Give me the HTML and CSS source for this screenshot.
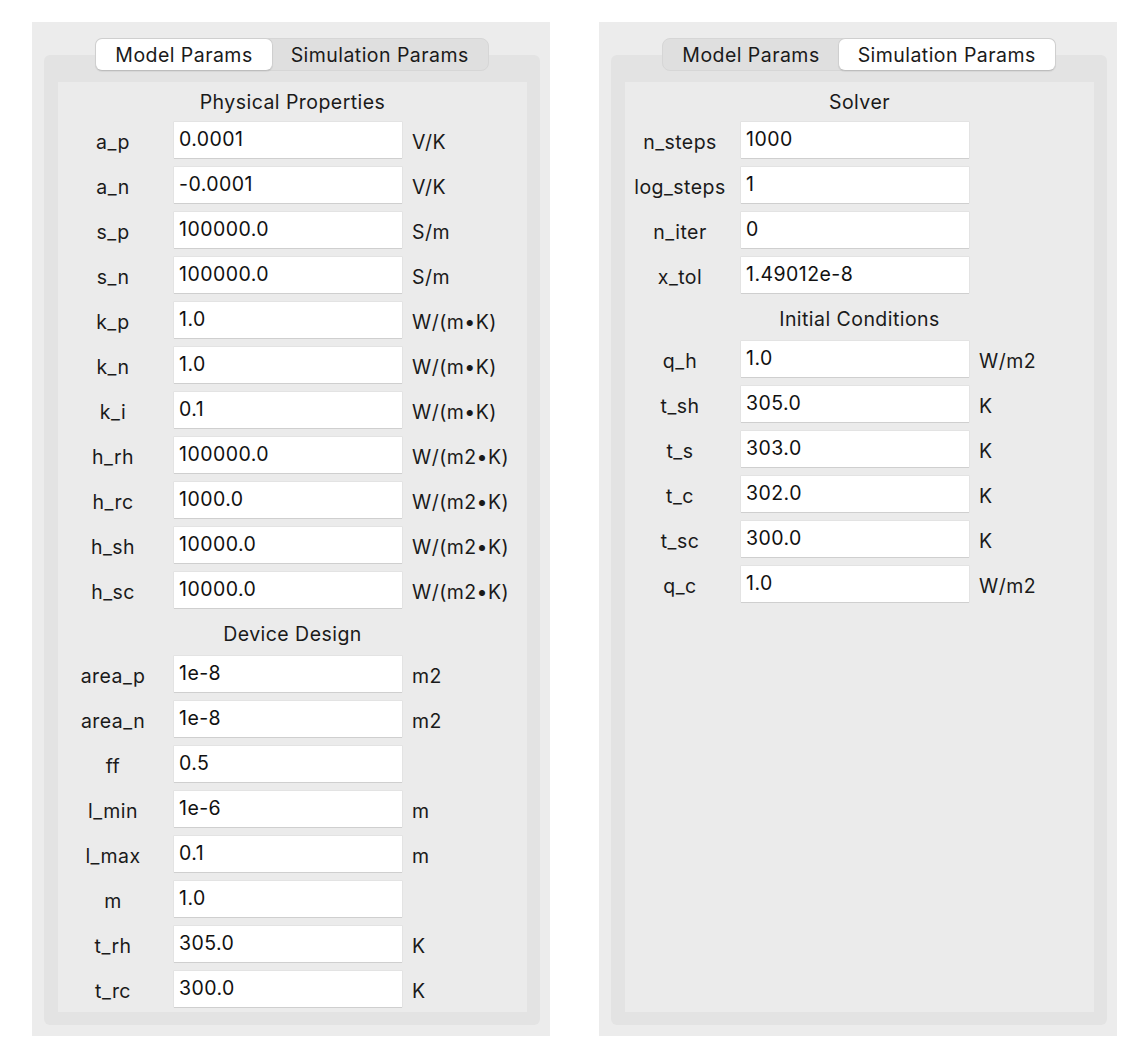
FILE: index.html
```html
<!DOCTYPE html>
<html>
<head>
<meta charset="utf-8">
<link rel="stylesheet" href="styles.css">
</head>
<body>
<div class="window">
  <div class="tabs">
    <div class="tab selected">Model Params</div>
    <div class="tab">Simulation Params</div>
  </div>
  <div class="group">
    <div class="content">
      <div class="title">Physical Properties</div>
      <div class="row"><span class="label">a_p</span><span class="field">0.0001</span><span class="unit">V/K</span></div>
      <div class="row"><span class="label">a_n</span><span class="field">-0.0001</span><span class="unit">V/K</span></div>
      <div class="row"><span class="label">s_p</span><span class="field">100000.0</span><span class="unit">S/m</span></div>
      <div class="row"><span class="label">s_n</span><span class="field">100000.0</span><span class="unit">S/m</span></div>
      <div class="row"><span class="label">k_p</span><span class="field">1.0</span><span class="unit">W/(m•K)</span></div>
      <div class="row"><span class="label">k_n</span><span class="field">1.0</span><span class="unit">W/(m•K)</span></div>
      <div class="row"><span class="label">k_i</span><span class="field">0.1</span><span class="unit">W/(m•K)</span></div>
      <div class="row"><span class="label">h_rh</span><span class="field">100000.0</span><span class="unit">W/(m2•K)</span></div>
      <div class="row"><span class="label">h_rc</span><span class="field">1000.0</span><span class="unit">W/(m2•K)</span></div>
      <div class="row"><span class="label">h_sh</span><span class="field">10000.0</span><span class="unit">W/(m2•K)</span></div>
      <div class="row"><span class="label">h_sc</span><span class="field">10000.0</span><span class="unit">W/(m2•K)</span></div>
      <div class="title sub">Device Design</div>
      <div class="row"><span class="label">area_p</span><span class="field">1e-8</span><span class="unit">m2</span></div>
      <div class="row"><span class="label">area_n</span><span class="field">1e-8</span><span class="unit">m2</span></div>
      <div class="row"><span class="label">ff</span><span class="field">0.5</span><span class="unit"></span></div>
      <div class="row"><span class="label">l_min</span><span class="field">1e-6</span><span class="unit">m</span></div>
      <div class="row"><span class="label">l_max</span><span class="field">0.1</span><span class="unit">m</span></div>
      <div class="row"><span class="label">m</span><span class="field">1.0</span><span class="unit"></span></div>
      <div class="row"><span class="label">t_rh</span><span class="field">305.0</span><span class="unit">K</span></div>
      <div class="row"><span class="label">t_rc</span><span class="field">300.0</span><span class="unit">K</span></div>
    </div>
  </div>
</div>
<div class="window">
  <div class="tabs">
    <div class="tab">Model Params</div>
    <div class="tab selected">Simulation Params</div>
  </div>
  <div class="group">
    <div class="content">
      <div class="title">Solver</div>
      <div class="row"><span class="label">n_steps</span><span class="field">1000</span><span class="unit"></span></div>
      <div class="row"><span class="label">log_steps</span><span class="field">1</span><span class="unit"></span></div>
      <div class="row"><span class="label">n_iter</span><span class="field">0</span><span class="unit"></span></div>
      <div class="row"><span class="label">x_tol</span><span class="field">1.49012e-8</span><span class="unit"></span></div>
      <div class="title sub">Initial Conditions</div>
      <div class="row"><span class="label">q_h</span><span class="field">1.0</span><span class="unit">W/m2</span></div>
      <div class="row"><span class="label">t_sh</span><span class="field">305.0</span><span class="unit">K</span></div>
      <div class="row"><span class="label">t_s</span><span class="field">303.0</span><span class="unit">K</span></div>
      <div class="row"><span class="label">t_c</span><span class="field">302.0</span><span class="unit">K</span></div>
      <div class="row"><span class="label">t_sc</span><span class="field">300.0</span><span class="unit">K</span></div>
      <div class="row"><span class="label">q_c</span><span class="field">1.0</span><span class="unit">W/m2</span></div>
    </div>
  </div>
</div>
</body>
</html>
```
FILE: styles.css
```css
html, body {
  margin: 0;
  background: #ffffff;
}
body {
  display: flex;
  gap: 49px;
  padding: 22px 0 0 32px;
  font-family: Inter, "Noto Sans", sans-serif;
  font-size: 19.5px;
  letter-spacing: 0.45px;
  color: #1a1a1a;
}
.window {
  width: 518px;
  height: 1014px;
  box-sizing: border-box;
  background: #ececec;
  padding: 16px 10px 11px 12px;
  display: flex;
  flex-direction: column;
}
.tabs {
  align-self: center;
  display: flex;
  height: 33px;
  box-sizing: border-box;
  margin-bottom: -16.5px;
  position: relative;
  z-index: 1;
  background: #dfdfdf;
  border: 1px solid #d6d6d6;
  border-radius: 8px;
}
.tab {
  display: flex;
  align-items: center;
  padding: 0 19px;
  white-space: nowrap;
  color: #1a1a1a;
  border-radius: 7px;
}
.tab.selected {
  background: #ffffff;
  margin: -1px;
  border: 1px solid #cfcfcf;
  border-bottom-color: #bdbdbd;
  box-shadow: 0 1px 1px rgba(0,0,0,0.06);
}
.group {
  flex: 1;
  background: #e3e3e3;
  border-radius: 6px;
  padding: 27px 13px 13px 14px;
  display: flex;
  flex-direction: column;
}
.content {
  flex: 1;
  background: #ebebeb;
  display: flex;
  flex-direction: column;
}
.title {
  height: 40px;
  line-height: 40px;
  text-align: center;
}
.title.sub {
  margin-top: 8px;
  line-height: 37px;
}
.row {
  display: flex;
  align-items: center;
  height: 36px;
}
.row + .row {
  margin-top: 9px;
}
.label {
  width: 110px;
  text-align: center;
  flex: none;
  padding-top: 5px;
}
.field {
  width: 228px;
  height: 36px;
  box-sizing: border-box;
  margin-left: 6px;
  padding: 0 5px;
  line-height: 34px;
  background: #ffffff;
  box-shadow: 0 0 0 0.5px #dcdcdc, 0 1px 0 #c2c2c2;
  color: #111;
  flex: none;
}
.unit {
  margin-left: 10px;
  padding-top: 5px;
}
```
